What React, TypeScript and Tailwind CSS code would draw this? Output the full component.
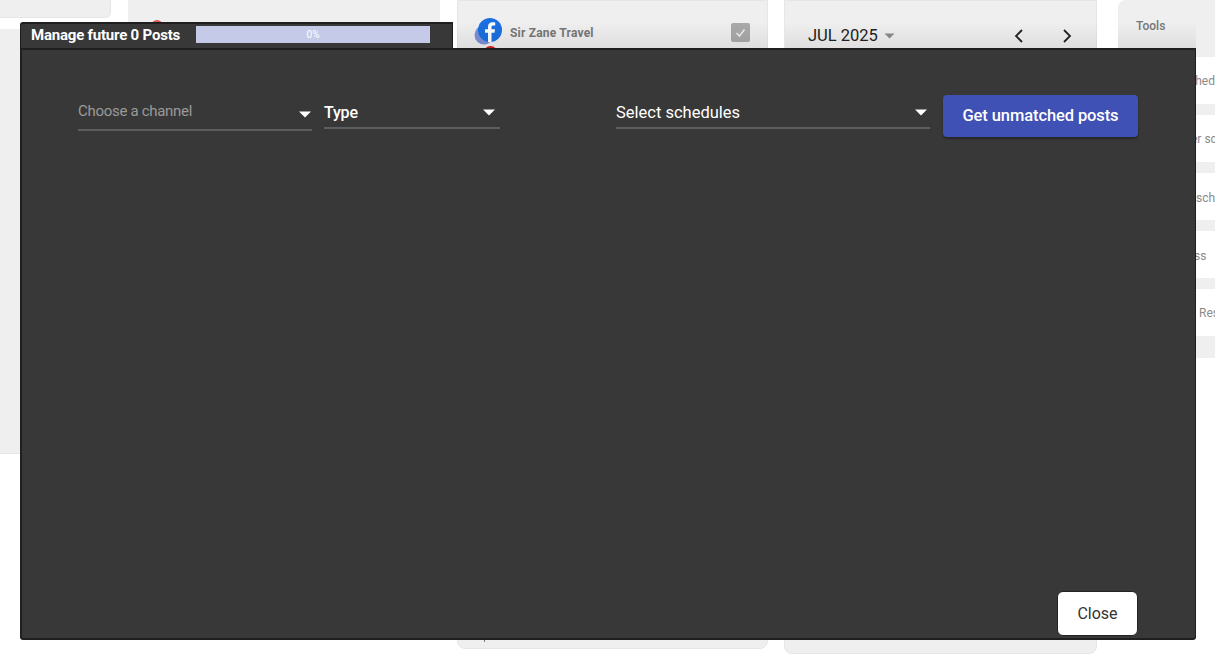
import React from "react";

function Row({ text, pad = "pl-[79px]" }: { text: string; pad?: string }) {
  return (
    <div className={`h-[47px] bg-white flex items-center ${pad} text-[12px] text-[#8a8a8a] whitespace-nowrap overflow-hidden`}>
      {text}
    </div>
  );
}

function Caret({ className = "" }: { className?: string }) {
  return (
    <svg width="14" height="7" viewBox="0 0 14 7" className={className}>
      <path d="M1 0.5h12L7 6.5z" fill="#fff" />
    </svg>
  );
}

function Facebook() {
  return (
    <svg width="30" height="36" viewBox="0 0 30 36" className="block shrink-0">
      <circle cx="16.5" cy="35" r="7" fill="#d61f26" />
      <circle cx="10" cy="17" r="9.5" fill="#7d8fd8" />
      <circle cx="16" cy="12" r="12" fill="#1b6fe0" />
      <path d="M17.5 24V14.8h3l.5-3.5h-3.5V9.2c0-1 .4-1.7 1.8-1.7h1.9V4.4c-.4 0-1.4-.2-2.7-.2-2.7 0-4.5 1.6-4.5 4.6v2.5h-3v3.5h3V24z" fill="#fff" />
    </svg>
  );
}

export default function App() {
  return (
    <div className="relative w-[1215px] h-[654px] overflow-hidden bg-white font-['Roboto',sans-serif]">
      <div className="flex items-start h-[654px]">
        <div className="w-[128px] shrink-0 flex flex-col">
          <div className="w-[111px] h-[18px] bg-[#efefef] rounded-br-[6px] border-b border-r border-[#e6e6e6]" />
          <div className="mt-[11px] w-[128px] h-[425px] bg-[#efefef] border-b border-[#e6e6e6]" />
        </div>
        <div className="w-[312px] h-[40px] shrink-0 bg-[#efefef] pt-[20px] pl-[23px] overflow-hidden">
          <div className="w-[12px] h-[12px] rounded-full bg-[#d9534f]" />
        </div>
        <div className="ml-[17px] w-[311px] h-[649px] shrink-0 bg-[#efefef] border border-[#e6e6e6] rounded-b-[8px] flex flex-col justify-between">
          <div className="flex items-start pt-[17px] pl-[16px] pr-[17px]">
            <Facebook />
            <span className="mt-[6px] ml-[6px] text-[12px] font-bold tracking-[0.2px] text-[#777]">Sir Zane Travel</span>
            <span className="ml-auto mt-[5px] w-[19px] h-[19px] rounded-[2px] bg-[#a9a9a9] flex items-center justify-center">
              <svg width="13" height="13" viewBox="0 0 13 13">
                <path d="M2.5 7l3 3 5-6.5" fill="none" stroke="#eee" strokeWidth="1.6" />
              </svg>
            </span>
          </div>
          <div className="ml-[26px] mb-[6px] w-px h-[4px] bg-[#777]" />
        </div>
        <div className="ml-[16px] w-[313px] h-[654px] shrink-0 bg-[#efefef] border border-[#e6e6e6] rounded-b-[8px]">
          <div className="flex items-center mt-[23px] pl-[23px] h-[24px] text-[16.5px] text-[#222]">
            <span>JUL 2025</span>
            <svg width="11" height="6" viewBox="0 0 11 6" className="ml-[6px]">
              <path d="M0.5 0.5h10L5.5 5.5z" fill="#8a8a8a" />
            </svg>
            <svg width="14" height="16" viewBox="0 0 14 16" className="ml-[117px]">
              <path d="M10 2L4 8l6 6" fill="none" stroke="#222" strokeWidth="1.8" />
            </svg>
            <svg width="14" height="16" viewBox="0 0 14 16" className="ml-[34px]">
              <path d="M4 2l6 6-6 6" fill="none" stroke="#222" strokeWidth="1.8" />
            </svg>
          </div>
        </div>
        <div className="ml-[21px] w-[97px] shrink-0 flex flex-col">
          <div className="h-[57px] bg-[#efefef] rounded-tl-[8px] pl-[18px] pt-[17px] text-[12px] font-medium text-[#777]">Tools</div>
          <Row text="Unmatched" pad="justify-end" />
          <div className="h-[11px] bg-[#efefef]" />
          <Row text="er schedule" pad="pl-[73px]" />
          <div className="h-[11px] bg-[#efefef]" />
          <Row text="schedule" pad="pl-[78px] pt-[2px]" />
          <div className="h-[11px] bg-[#efefef]" />
          <Row text="ss" pad="pl-[76px] pt-[2px]" />
          <div className="h-[11px] bg-[#efefef]" />
          <Row text="Reset" pad="pl-[81px]" />
          <div className="h-[22px] bg-[#efefef]" />
        </div>
      </div>

      <div className="absolute left-[457px] top-[22px] w-[311px] h-[26px] bg-gradient-to-b from-black/0 to-black/[0.07] pointer-events-none" />
      <div className="absolute left-[785px] top-[22px] w-[312px] h-[26px] bg-gradient-to-b from-black/0 to-black/[0.07] pointer-events-none" />
      <div className="absolute left-[1118px] top-[22px] w-[78px] h-[26px] bg-gradient-to-b from-black/0 to-black/[0.07] pointer-events-none" />

      <div className="absolute left-[20px] top-[22px] w-[433px] h-[27px] bg-[#383838] border-t-2 border-x border-[#1f1f1f] flex items-center pl-[10px] pb-[2px] rounded-tl-[3px]">
        <span className="text-[15px] font-bold text-white tracking-[-0.2px] whitespace-nowrap">Manage future 0 Posts</span>
        <div className="absolute left-[175px] top-[2px] w-[234px] h-[17px] bg-[#c5cae9] flex items-center justify-center text-[10px] text-white">0%</div>
      </div>

      <div className="absolute left-[20px] top-[48px] w-[1176px] h-[592px] bg-[#383838] border-t-2 border-l-2 border-b-2 border-r border-[#1f1f1f] rounded-b-[3px] flex flex-col pl-[56px] pr-[57px] pt-[45px] pb-[2px]">
        <div className="flex items-start">
          <div className="w-[234px] h-[36px] border-b-2 border-[#5e5e5e] flex items-start justify-between">
            <span className="text-[15px] leading-[32px] text-[#9a9a9a] tracking-[-0.3px]">Choose a channel</span>
            <Caret className="mt-[16px]" />
          </div>
          <div className="ml-[12px] w-[176px] h-[34px] border-b-2 border-[#5e5e5e] flex items-start justify-between pr-[4px]">
            <span className="text-[16px] leading-[36px] text-white tracking-[-0.2px] font-medium">Type</span>
            <Caret className="mt-[14px]" />
          </div>
          <div className="ml-[116px] w-[314px] h-[34px] border-b-2 border-[#5e5e5e] flex items-start justify-between pr-[2px]">
            <span className="text-[16.5px] leading-[36px] text-white">Select schedules</span>
            <Caret className="mt-[14px]" />
          </div>
          <button className="ml-[13px] w-[195px] h-[42px] rounded-[4px] bg-[#3f51b5] text-white text-[16.5px] font-medium tracking-[-0.1px] shadow-[0_2px_2px_rgba(0,0,0,0.3)]">
            Get unmatched posts
          </button>
        </div>
        <div className="mt-auto flex justify-end">
          <button className="w-[81px] h-[45px] rounded-[6px] bg-white border border-[#222] text-[16px] text-[#333]">
            Close
          </button>
        </div>
      </div>
    </div>
  );
}
